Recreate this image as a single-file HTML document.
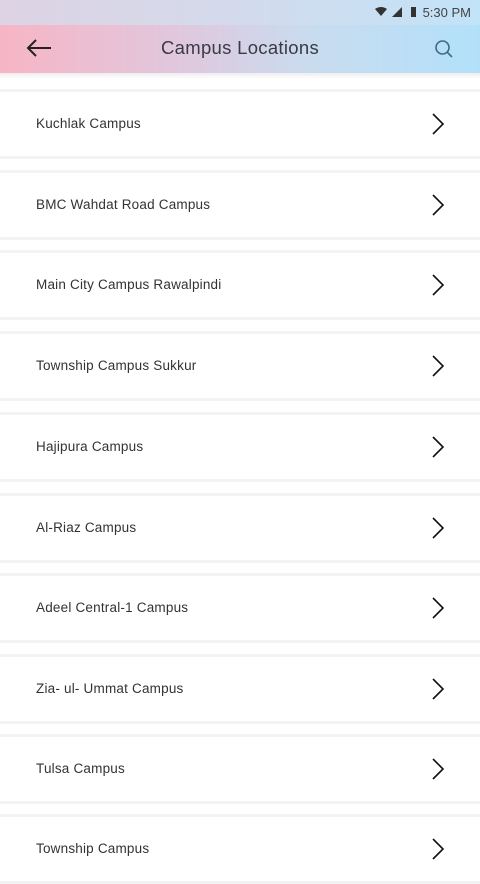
<!DOCTYPE html>
<html><head><meta charset="utf-8"><style>
*{margin:0;padding:0;box-sizing:border-box}
body{width:480px;height:853px;overflow:hidden;background:#fff;font-family:"Liberation Sans",sans-serif;position:relative}
.top{position:absolute;left:0;top:0;width:480px;height:73px;background:linear-gradient(90deg,#f7b5c5 0%,#e2c6dc 35%,#c9dcef 65%,#b2e0fa 100%)}
.status{position:absolute;left:0;top:0;width:480px;height:25px;background:linear-gradient(90deg,#ddd3e4 0%,#d6d9ea 40%,#c2e3f8 100%)}
.time{position:absolute;right:9px;top:5px;font-size:13px;color:#444}
.title{position:absolute;left:0;width:480px;top:37px;text-align:center;font-size:18.5px;color:#3a3a44;letter-spacing:.3px}
.shadow{position:absolute;top:73px;left:0;width:480px;height:6px;background:linear-gradient(#eeeef0,#fff)}
.card{position:absolute;left:0;width:480px;height:70px;border-top:3px solid #f3f3f3;border-bottom:3px solid #f3f3f3;background:#fff}
.card span{position:absolute;left:36px;top:24px;font-size:13.5px;color:#333;letter-spacing:.2px}
.card svg{position:absolute;left:430px;top:20px}
</style></head><body>
<div class="top"><div class="status"></div>
<svg style="position:absolute;left:375px;top:6px" width="46" height="12" viewBox="0 0 46 12"><path d="M0 3 Q6 -1 12 3 L6 10 Z" fill="#333"/><path d="M17 11 L27 1 L27 11 Z" fill="#333"/><rect x="36" y="1" width="5" height="10" fill="#333"/></svg>
<div class="time">5:30 PM</div>
<svg style="position:absolute;left:26px;top:38px" width="26" height="20" viewBox="0 0 26 20"><path d="M25 10 H2 M10 2 L2 10 L10 18" stroke="#222" stroke-width="2" fill="none"/></svg>
<div class="title">Campus Locations</div>
<svg style="position:absolute;left:434px;top:39px" width="20" height="20" viewBox="0 0 20 20"><circle cx="8.5" cy="8.5" r="6.5" stroke="#3b6b88" stroke-width="1.6" fill="none"/><path d="M13.3 13.3 L18 18" stroke="#3b6b88" stroke-width="1.6"/></svg>
</div>
<div class="shadow"></div>
<div class="card" style="top:89px"><span>Kuchlak Campus</span><svg width="16" height="24" viewBox="0 0 16 24"><path d="M3 2 L13 12 L3 22" stroke="#111" stroke-width="1.6" fill="none"/></svg></div>
<div class="card" style="top:170px"><span>BMC Wahdat Road Campus</span><svg width="16" height="24" viewBox="0 0 16 24"><path d="M3 2 L13 12 L3 22" stroke="#111" stroke-width="1.6" fill="none"/></svg></div>
<div class="card" style="top:250px"><span>Main City Campus Rawalpindi</span><svg width="16" height="24" viewBox="0 0 16 24"><path d="M3 2 L13 12 L3 22" stroke="#111" stroke-width="1.6" fill="none"/></svg></div>
<div class="card" style="top:331px"><span>Township Campus Sukkur</span><svg width="16" height="24" viewBox="0 0 16 24"><path d="M3 2 L13 12 L3 22" stroke="#111" stroke-width="1.6" fill="none"/></svg></div>
<div class="card" style="top:412px"><span>Hajipura Campus</span><svg width="16" height="24" viewBox="0 0 16 24"><path d="M3 2 L13 12 L3 22" stroke="#111" stroke-width="1.6" fill="none"/></svg></div>
<div class="card" style="top:493px"><span>Al-Riaz Campus</span><svg width="16" height="24" viewBox="0 0 16 24"><path d="M3 2 L13 12 L3 22" stroke="#111" stroke-width="1.6" fill="none"/></svg></div>
<div class="card" style="top:573px"><span>Adeel Central-1 Campus</span><svg width="16" height="24" viewBox="0 0 16 24"><path d="M3 2 L13 12 L3 22" stroke="#111" stroke-width="1.6" fill="none"/></svg></div>
<div class="card" style="top:654px"><span>Zia- ul- Ummat Campus</span><svg width="16" height="24" viewBox="0 0 16 24"><path d="M3 2 L13 12 L3 22" stroke="#111" stroke-width="1.6" fill="none"/></svg></div>
<div class="card" style="top:734px"><span>Tulsa Campus</span><svg width="16" height="24" viewBox="0 0 16 24"><path d="M3 2 L13 12 L3 22" stroke="#111" stroke-width="1.6" fill="none"/></svg></div>
<div class="card" style="top:814px"><span>Township Campus</span><svg width="16" height="24" viewBox="0 0 16 24"><path d="M3 2 L13 12 L3 22" stroke="#111" stroke-width="1.6" fill="none"/></svg></div>
</body></html>
